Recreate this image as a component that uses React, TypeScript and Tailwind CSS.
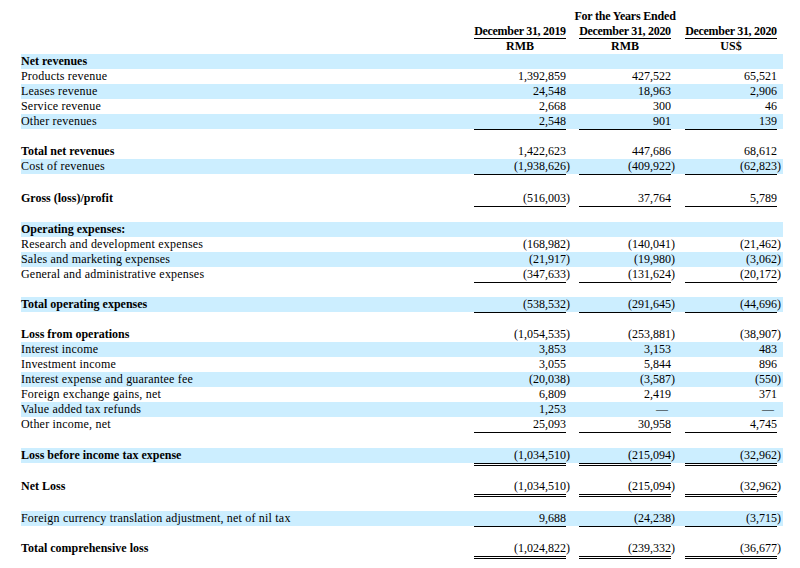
import { Fragment } from 'react';

// Consolidated statement of comprehensive loss (SEC-style table)
type Row = {
  label?: string;
  v?: [string, string, string];
  bold?: boolean;
  shade?: boolean;
  rule?: 'single' | 'double';
  gap?: 13 | 14 | 15 | 16;
};

const PAREN = ['w-[13px]', 'w-[14px]', 'w-[6px]'];
const GAP: Record<number, string> = { 13: 'h-[13px]', 14: 'h-[14px]', 15: 'h-[15px]', 16: 'h-[16px]' };

const rows: Row[] = [
  { label: 'Net revenues', bold: true, shade: true },
  { label: 'Products revenue', v: ['1,392,859', '427,522', '65,521'] },
  { label: 'Leases revenue', v: ['24,548', '18,963', '2,906'], shade: true },
  { label: 'Service revenue', v: ['2,668', '300', '46'] },
  { label: 'Other revenues', v: ['2,548', '901', '139'], shade: true, rule: 'single' },
  { gap: 14 },
  { label: 'Total net revenues', v: ['1,422,623', '447,686', '68,612'], bold: true },
  { label: 'Cost of revenues', v: ['(1,938,626)', '(409,922)', '(62,823)'], shade: true, rule: 'single' },
  { gap: 16 },
  { label: 'Gross (loss)/profit', v: ['(516,003)', '37,764', '5,789'], bold: true, rule: 'single' },
  { gap: 15 },
  { label: 'Operating expenses:', bold: true, shade: true },
  { label: 'Research and development expenses', v: ['(168,982)', '(140,041)', '(21,462)'] },
  { label: 'Sales and marketing expenses', v: ['(21,917)', '(19,980)', '(3,062)'], shade: true },
  { label: 'General and administrative expenses', v: ['(347,633)', '(131,624)', '(20,172)'], rule: 'single' },
  { gap: 14 },
  { label: 'Total operating expenses', v: ['(538,532)', '(291,645)', '(44,696)'], bold: true, shade: true, rule: 'single' },
  { gap: 14 },
  { label: 'Loss from operations', v: ['(1,054,535)', '(253,881)', '(38,907)'], bold: true },
  { label: 'Interest income', v: ['3,853', '3,153', '483'], shade: true },
  { label: 'Investment income', v: ['3,055', '5,844', '896'] },
  { label: 'Interest expense and guarantee fee', v: ['(20,038)', '(3,587)', '(550)'], shade: true },
  { label: 'Foreign exchange gains, net', v: ['6,809', '2,419', '371'] },
  { label: 'Value added tax refunds', v: ['1,253', '—', '—'], shade: true },
  { label: 'Other income, net', v: ['25,093', '30,958', '4,745'], rule: 'single' },
  { gap: 15 },
  { label: 'Loss before income tax expense', v: ['(1,034,510)', '(215,094)', '(32,962)'], bold: true, shade: true, rule: 'double' },
  { gap: 13 },
  { label: 'Net Loss', v: ['(1,034,510)', '(215,094)', '(32,962)'], bold: true, rule: 'double' },
  { gap: 14 },
  { label: 'Foreign currency translation adjustment, net of nil tax', v: ['9,688', '(24,238)', '(3,715)'], shade: true, rule: 'single' },
  { gap: 14 },
  { label: 'Total comprehensive loss', v: ['(1,024,822)', '(239,332)', '(36,677)'], bold: true, rule: 'double' },
];

function Num({ value, i }: { value: string; i: number }) {
  const neg = value.startsWith('(');
  const dash = value === '—';
  return (
    <>
      <div className={`w-[92px] text-right whitespace-nowrap ${dash ? 'pr-[3px]' : ''}`}>
        {neg ? value.slice(0, -1) : value}
      </div>
      <div className={PAREN[i]}>{neg ? ')' : ''}</div>
    </>
  );
}

function Rule({ kind }: { kind: 'single' | 'double' }) {
  return (
    <div className="flex">
      <div className="w-[453px]" />
      {[0, 1, 2].map(i => (
        <Fragment key={i}>
          <div
            className={
              kind === 'double'
                ? 'w-[92px] border-b-[3px] border-double border-black'
                : 'w-[92px] border-b border-black'
            }
          />
          <div className={PAREN[i]} />
        </Fragment>
      ))}
    </div>
  );
}

function Header() {
  const cols = ['December 31, 2019', 'December 31, 2020', 'December 31, 2020'];
  const units = ['RMB', 'RMB', 'US$'];
  return (
    <div className="pt-[9px] font-bold">
      <div className="flex h-[15px]">
        <div className="w-[453px]" />
        <div className="w-[92px]" />
        <div className={PAREN[0]} />
        <div className="w-[92px] flex justify-center whitespace-nowrap tracking-[-0.2px]">For the Years Ended</div>
      </div>
      <div className="flex h-[15px]">
        <div className="w-[453px]" />
        {cols.map((c, i) => (
          <Fragment key={i}>
            <div className="w-[92px] flex justify-center whitespace-nowrap tracking-[-0.3px] border-b border-black leading-[14px]">
              {c}
            </div>
            <div className={PAREN[i]} />
          </Fragment>
        ))}
      </div>
      <div className="flex h-[15px]">
        <div className="w-[453px]" />
        {units.map((u, i) => (
          <Fragment key={i}>
            <div className="w-[92px] text-center">{u}</div>
            <div className={PAREN[i]} />
          </Fragment>
        ))}
      </div>
    </div>
  );
}

export default function App() {
  return (
    <div className="w-[800px] h-[568px] overflow-hidden bg-white text-black text-[12px] leading-[15px] font-['Liberation_Serif','Times_New_Roman',serif]">
      <div className="pl-[21px] w-[783px]">
        <Header />
        {rows.map((r, idx) =>
          r.gap ? (
            <div key={idx} className={GAP[r.gap]} />
          ) : (
            <Fragment key={idx}>
              <div className={`flex h-[15px] ${r.shade ? 'bg-[#cceeff]' : ''}`}>
                <div className={`w-[453px] whitespace-nowrap ${r.bold ? 'font-bold' : 'tracking-[0.2px]'}`}>{r.label}</div>
                {r.v && r.v.map((val, i) => <Num key={i} value={val} i={i} />)}
              </div>
              {r.rule && <Rule kind={r.rule} />}
            </Fragment>
          )
        )}
      </div>
    </div>
  );
}
